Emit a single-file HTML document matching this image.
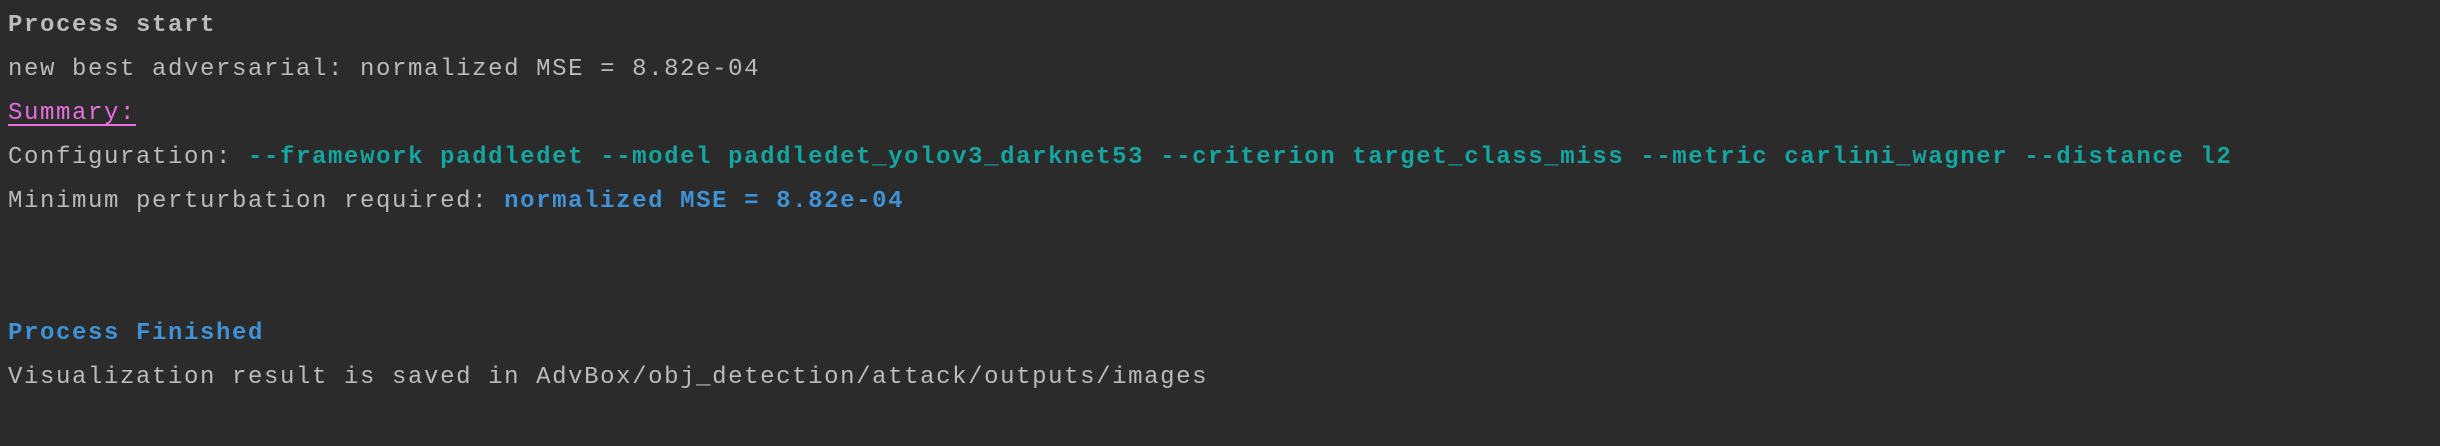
<!DOCTYPE html>
<html><head><meta charset="utf-8"><style>
html,body{margin:0;padding:0;background:#2b2b2b;}
body{width:2440px;height:446px;overflow:hidden;}
.c{padding:4px 0 0 8px;font-family:"Liberation Mono","DejaVu Sans Mono",monospace;font-size:24px;letter-spacing:1.6px;line-height:44px;color:#bbbbbb;white-space:pre;}
.b{font-weight:bold;}
.t{color:#14a5a0;font-weight:bold;}
.bl{color:#3f92d6;font-weight:bold;}
.p{color:#e96fe0;text-decoration:underline;text-underline-offset:5px;}
</style></head><body><div class="c"><div class="b">Process start</div><div>new best adversarial: normalized MSE = 8.82e-04</div><div><span class="p">Summary:</span></div><div>Configuration: <span class="t">--framework paddledet --model paddledet_yolov3_darknet53 --criterion target_class_miss --metric carlini_wagner --distance l2</span></div><div>Minimum perturbation required: <span class="bl">normalized MSE = 8.82e-04</span></div><div> </div><div> </div><div class="bl">Process Finished</div><div>Visualization result is saved in AdvBox/obj_detection/attack/outputs/images</div></div></body></html>
